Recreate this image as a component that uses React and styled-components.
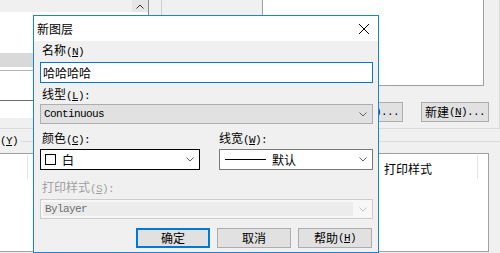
import React from "react";
import styled, { createGlobalStyle } from "styled-components";

const GlobalStyle = createGlobalStyle`
  html, body { margin: 0; padding: 0; }
  body {
    background: #f0f0f0;
    font-family: "Noto Sans CJK SC", "Liberation Sans", sans-serif;
    font-size: 12px;
    line-height: 14px;
    color: #000;
  }
`;

const Screen = styled.div`
  position: relative;
  width: 500px;
  height: 253px;
  overflow: hidden;
  background: #f0f0f0;
`;

// ---- window behind the dialog ----

const Upper = styled.div`
  display: flex;
  height: 129px;
  box-sizing: border-box;
  border-bottom: 1px solid #dcdcdc;
`;

const LayerPane = styled.div`
  width: 149px;
  height: 118px;
  box-sizing: border-box;
  border-right: 1px solid #8c8c8c;
  background: #fff;
  display: flex;
  flex-direction: column;
`;

const PaneHead = styled.div`
  height: 12px;
  flex: none;
  display: flex;
  justify-content: flex-end;
  background: #f0f0f0;
`;

const SortCell = styled.div`
  width: 16px;
  display: flex;
  align-items: center;
  justify-content: center;
  background: #e6e6e6;
`;

const PaneRow = styled.div`
  flex: none;
  height: ${(p) => p.$h}px;
  background: ${(p) => (p.$sel ? "#d9d9d9" : "#fff")};
`;

const PaneRule = styled.div`
  flex: none;
  height: 1px;
  background: ${(p) => p.$c};
`;

const Splitter = styled.div`
  width: 12px;
  border-right: 1px solid #cfcfcf;
`;

const Middle = styled.div`
  flex: 1;
`;

const RightPane = styled.div`
  width: 238px;
  box-sizing: border-box;
  border-right: 1px solid #dcdcdc;
  display: flex;
  flex-direction: column;
`;

const Preview = styled.div`
  width: 222px;
  height: 86px;
  box-sizing: border-box;
  background: #fff;
  border: 1px solid #a0a0a0;
  border-top: none;
`;

const PaneButtons = styled.div`
  display: flex;
  justify-content: flex-end;
  gap: 18px;
  margin-top: 16px;
  padding-right: 10px;
`;

const Button = styled.div`
  box-sizing: border-box;
  width: ${(p) => p.$w}px;
  height: 20px;
  flex: none;
  background: #e1e1e1;
  border: ${(p) => (p.$default ? "2px solid #0078d7" : "1px solid #adadad")};
  display: flex;
  align-items: center;
  justify-content: center;
  white-space: nowrap;
`;

const Legend = styled.div`
  display: flex;
  align-items: center;
  height: 14px;
  margin-top: 5px;
`;

const LegendLine = styled.div`
  flex: 1;
  height: 1px;
  margin-left: 3px;
  background: #dcdcdc;
`;

const ListBox = styled.div`
  width: 489px;
  height: 99px;
  box-sizing: border-box;
  margin-top: 5px;
  background: #fff;
  border: 1px solid #a0a0a0;
  border-left: none;
`;

const ListHead = styled.div`
  display: grid;
  grid-template-columns: 28px 1fr 100px 10px;
  height: 26px;
`;

const HeadCell = styled.div`
  display: flex;
  align-items: center;
  margin: 1px 0;
  padding: 3px 0 0 6px;
  border-right: 1px solid #e5e5e5;
  white-space: nowrap;
  &:last-child {
    border-right: none;
  }
`;

// ---- dialog ----

const Dialog = styled.div`
  position: absolute;
  left: 33px;
  top: 15px;
  width: 346px;
  height: 238px;
  box-sizing: border-box;
  border: 1px solid #1883d7;
  background: #f0f0f0;
  display: flex;
  flex-direction: column;
`;

const TitleBar = styled.div`
  height: 25px;
  flex: none;
  background: #fff;
  display: flex;
  align-items: center;
  justify-content: space-between;
  padding-left: 3px;
`;

const CloseButton = styled.div`
  width: 28px;
  height: 25px;
  display: flex;
  align-items: center;
  justify-content: center;
`;

const Body = styled.div`
  flex: 1;
  display: flex;
  flex-direction: column;
  padding: 0 5px 0 6px;
`;

const Field = styled.div`
  display: flex;
  flex-direction: column;
  gap: ${(p) => p.$gap}px;
  margin-top: ${(p) => p.$top || 0}px;
  width: ${(p) => (p.$w ? `${p.$w}px` : "auto")};
`;

const Row = styled.div`
  display: flex;
  justify-content: space-between;
  margin-top: ${(p) => p.$top}px;
`;

const Label = styled.div`
  height: 14px;
  line-height: 14px;
  padding-left: ${(p) => p.$indent ?? 2}px;
  color: ${(p) => (p.$off ? "#a0a0a0" : "#000")};
  white-space: nowrap;
`;

const Mono = styled.span`
  font-family: "Liberation Mono", monospace;
  font-size: 11px;
  letter-spacing: -0.6px;
  color: ${(p) => p.$color || "inherit"};
  u {
    text-decoration-thickness: 1px;
    text-underline-offset: 1px;
  }
`;

const TextBox = styled.div`
  height: 21px;
  box-sizing: border-box;
  border: 1px solid #0078d7;
  background: #fff;
  display: flex;
  align-items: center;
  padding-left: 2px;
`;

const comboBorder = { flat: "#adadad", white: "#7a7a7a", dark: "#000", off: "#cccccc" };
const comboFill = { flat: "#e1e1e1", white: "#fff", dark: "#fff", off: "#f7f7f7" };

const Combo = styled.div`
  height: ${(p) => p.$h}px;
  box-sizing: border-box;
  display: flex;
  align-items: center;
  gap: ${(p) => (p.$kind === "off" ? 6 : 4)}px;
  padding: ${(p) => (p.$kind === "off" ? "2px 5px 2px 2px" : `0 5px 0 ${p.$pl}px`)};
  border: 1px solid ${(p) => comboBorder[p.$kind]};
  background: ${(p) => comboFill[p.$kind]};
`;

const ComboValue = styled.div`
  flex: 1;
  height: 100%;
  min-width: 0;
  display: flex;
  align-items: center;
  white-space: nowrap;
`;

const OffValue = styled(ComboValue)`
  background: #ececec;
  padding-left: 2px;
`;

const Swatch = styled.div`
  width: 11px;
  height: 11px;
  box-sizing: border-box;
  border: 1px solid #000;
  background: #fff;
  margin-right: 6px;
`;

const LineSample = styled.div`
  width: 41px;
  height: 1px;
  background: #000;
  margin-right: 6px;
`;

const ButtonBar = styled.div`
  display: flex;
  justify-content: flex-end;
  gap: 7px;
  margin-top: 9px;
  padding-right: 1px;
`;

const Chevron = ({ color = "#606060", up }) => (
  <svg width="8" height="5" viewBox="0 0 8 5">
    <polyline
      points={up ? "0.5,4.5 4,1 7.5,4.5" : "0.5,0.5 4,4 7.5,0.5"}
      fill="none"
      stroke={color}
      strokeWidth="1"
    />
  </svg>
);

const Hot = ({ k, tail = "" }) => (
  <Mono>
    (<u>{k}</u>){tail}
  </Mono>
);

export default function App() {
  return (
    <Screen>
      <GlobalStyle />
      <Upper>
        <LayerPane>
          <PaneHead>
            <SortCell>
              <Chevron up color="#333" />
            </SortCell>
          </PaneHead>
          <PaneRow $h={41} />
          <PaneRow $h={14} $sel />
          <PaneRow $h={3} />
          <PaneRule $c="#b4b4b4" />
          <PaneRow $h={29} />
          <PaneRule $c="#6e6e6e" />
          <PaneRow $h={17} />
        </LayerPane>
        <Splitter />
        <Middle />
        <RightPane>
          <Preview />
          <PaneButtons>
            <Button $w={68}>
              加载<Hot k="L" tail="..." />
            </Button>
            <Button $w={68}>
              新建<Hot k="N" tail="..." />
            </Button>
          </PaneButtons>
        </RightPane>
      </Upper>

      <Legend>
        <Hot k="Y" />
        <LegendLine />
      </Legend>
      <ListBox>
        <ListHead>
          <HeadCell />
          <HeadCell />
          <HeadCell>打印样式</HeadCell>
          <HeadCell />
        </ListHead>
      </ListBox>

      <Dialog>
        <TitleBar>
          <span>新图层</span>
          <CloseButton>
            <svg width="10" height="10" viewBox="0 0 10 10">
              <path d="M0 0L10 10M10 0L0 10" stroke="#000" strokeWidth="1" />
            </svg>
          </CloseButton>
        </TitleBar>
        <Body>
          <Field $top={2} $gap={5}>
            <Label>
              名称<Hot k="N" />
            </Label>
            <TextBox>哈哈哈哈</TextBox>
          </Field>

          <Field $top={4} $gap={3}>
            <Label>
              线型<Hot k="L" tail=":" />
            </Label>
            <Combo $kind="flat" $h={20} $pl={3}>
              <ComboValue>
                <Mono>Continuous</Mono>
              </ComboValue>
              <Chevron />
            </Combo>
          </Field>

          <Row $top={7}>
            <Field $gap={4} $w={160}>
              <Label>
                颜色<Hot k="C" tail=":" />
              </Label>
              <Combo $kind="dark" $h={21} $pl={4}>
                <ComboValue>
                  <Swatch />白
                </ComboValue>
                <Chevron />
              </Combo>
            </Field>
            <Field $gap={4} $w={154}>
              <Label $indent={0}>
                线宽<Hot k="W" tail=":" />
              </Label>
              <Combo $kind="white" $h={21} $pl={5}>
                <ComboValue>
                  <LineSample />默认
                </ComboValue>
                <Chevron />
              </Combo>
            </Field>
          </Row>

          <Field $top={10} $gap={5}>
            <Label $off>
              打印样式<Hot k="S" tail=":" />
            </Label>
            <Combo $kind="off" $h={20}>
              <OffValue>
                <Mono $color="#6d6d6d">Bylayer</Mono>
              </OffValue>
              <Chevron color="#c4c4c4" />
            </Combo>
          </Field>

          <ButtonBar>
            <Button $w={74} $default>
              确定
            </Button>
            <Button $w={74}>取消</Button>
            <Button $w={74}>
              帮助<Hot k="H" />
            </Button>
          </ButtonBar>
        </Body>
      </Dialog>
    </Screen>
  );
}
